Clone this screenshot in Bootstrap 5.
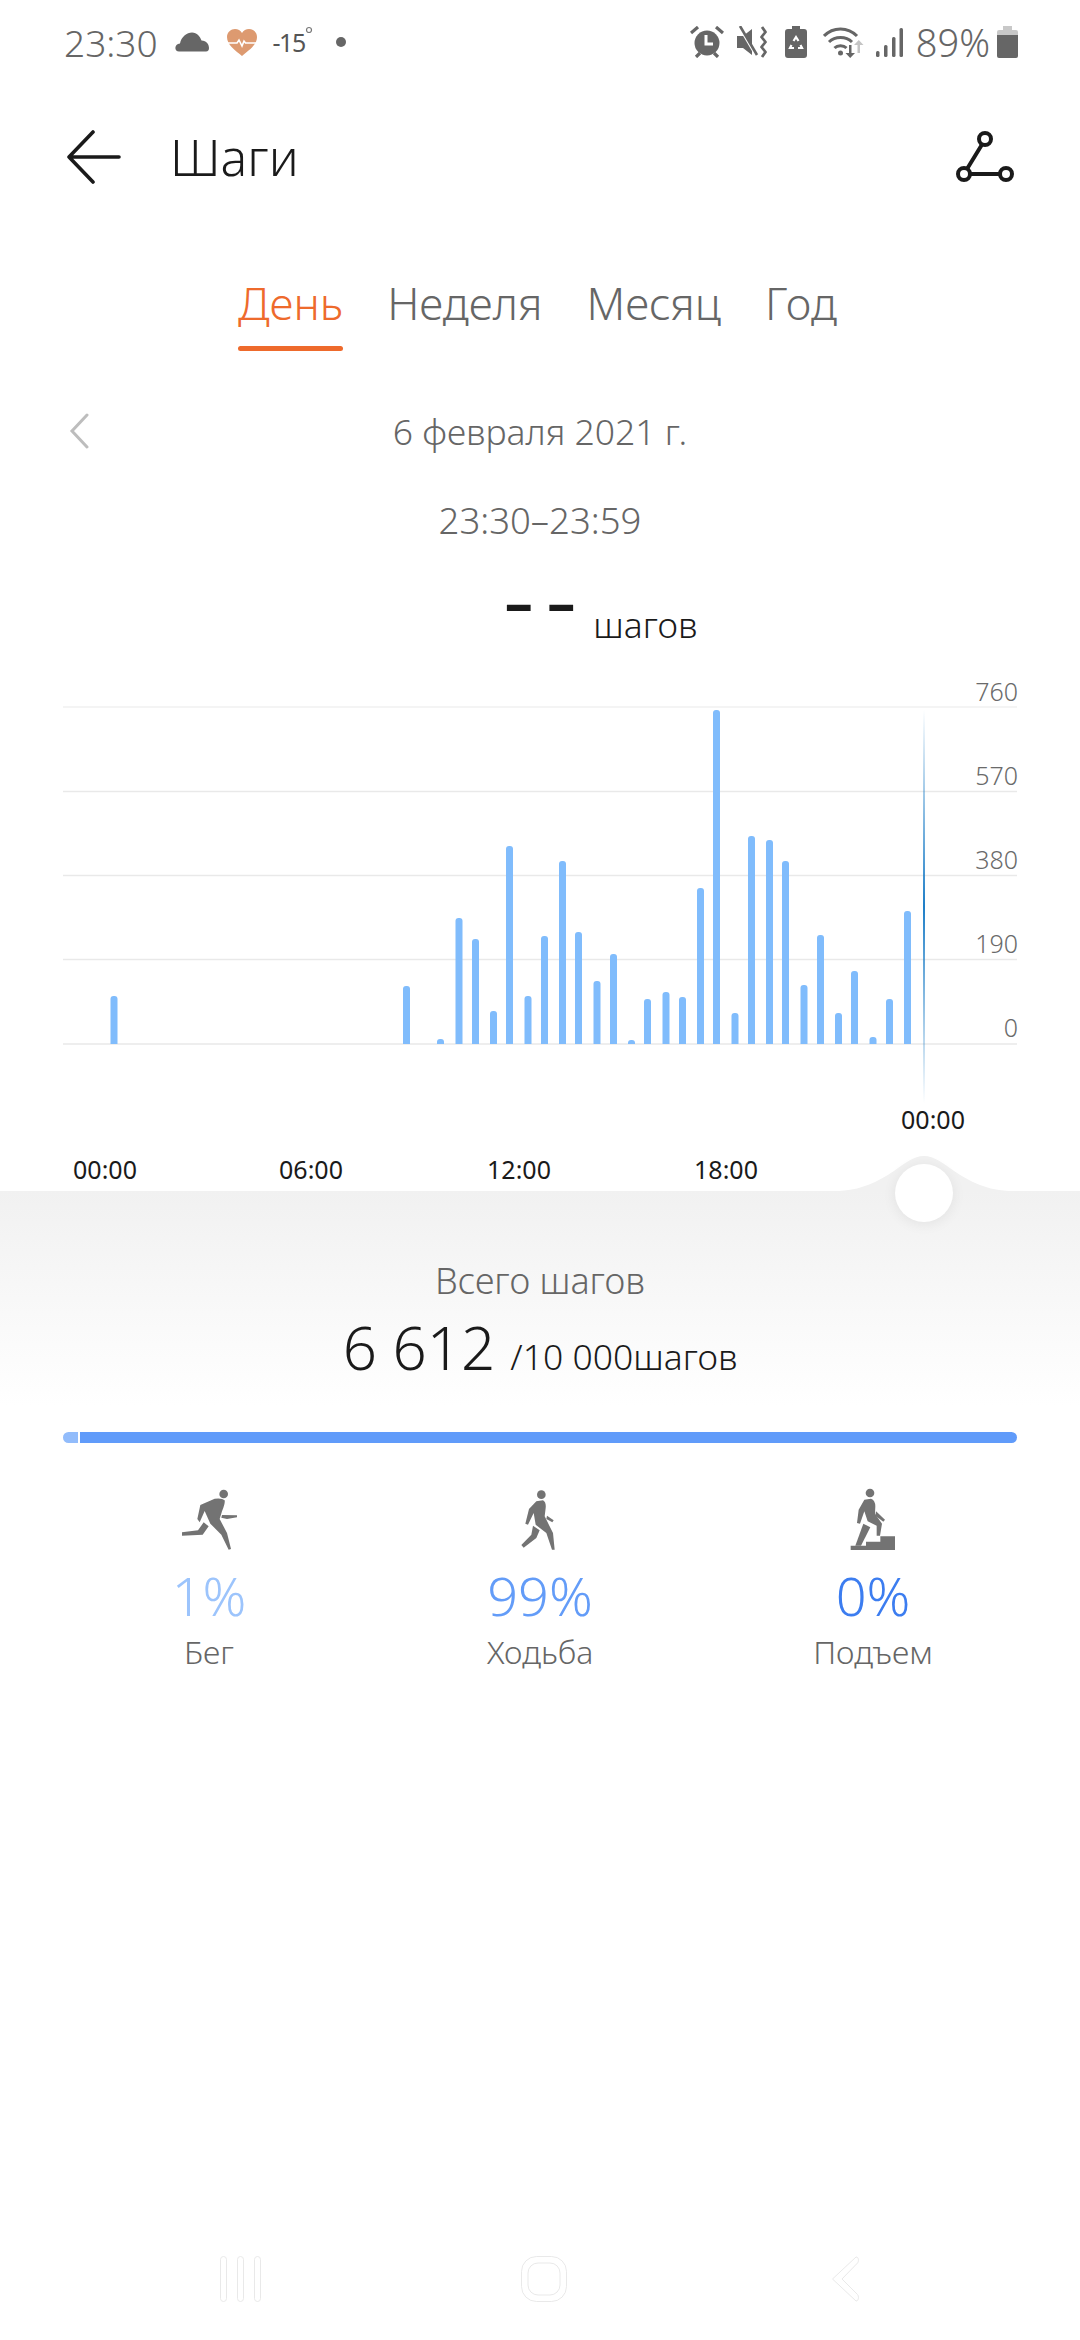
<!DOCTYPE html>
<html lang="ru">
<head>
<meta charset="utf-8">
<title>Шаги</title>
<link href="https://cdn.jsdelivr.net/npm/bootstrap@5.3.0/dist/css/bootstrap.min.css" rel="stylesheet">
<style>
html,body{width:1080px;height:2340px;overflow:hidden;background:#fff;}
body{font-family:"Noto Sans","Open Sans",sans-serif;font-weight:300;color:#666;}
.phone{width:1080px;height:2340px;}
.sbar{height:84px;padding:0 62px 0 64px;font-size:37px;color:#666;line-height:1;}
.sbar svg{display:block;flex:none;}
.temp{font-size:25px;letter-spacing:-1.500px;margin-left:16px;color:#555;font-weight:400;}
.cloudi{margin-left:17px;}
.hearti{margin-left:18px;}
.batt{font-size:38px;margin-left:13px;}
.hdr{height:146px;padding:0 66px 0 67px;}
.ttl{font-size:50px;color:#1a1a1a;margin:0 0 0 49px;font-weight:300;line-height:60px;}
.tabs{gap:44px;font-size:44.400px;line-height:60px;margin-top:43px;padding-right:5px;}
.tabi{display:flex;flex-direction:column;align-items:stretch;color:#666;}
.tabi::after{content:"";height:5px;margin-top:13px;border-radius:3px;background:transparent;}
.tabi.on{color:#ee6a2c;}
.tabi.on::after{background:#ee6a2c;}
.daterow{height:50px;margin-top:55px;padding:0 69px;font-size:35.500px;line-height:50px;}
.datetxt{flex:1;text-align:center;}
.spc{width:20px;}
.timer{height:50px;margin-top:39px;font-size:36.500px;line-height:50px;text-align:center;}
.stepr{height:125px;display:grid;grid-template-columns:1fr auto 1fr;}
.dash{font-size:56px;color:#1a1a1a;font-weight:700;line-height:70px;margin-top:21px;}
.unit{font-size:35.500px;color:#1a1a1a;line-height:46px;margin:56px 0 0 18px;}
.chartbox{height:521px;}
.chartbox svg{display:block;}
.panel{flex:1;background:linear-gradient(#f1f1f1 0,#fff 215px);padding-top:68px;}
.hump{position:absolute;left:829px;top:-36px;}
.thumb{position:absolute;left:895px;top:-27px;width:58px;height:58px;border-radius:50%;background:#fff;box-shadow:0 2px 14px rgba(0,0,0,.07);}
.cap{font-size:36px;line-height:44px;text-align:center;}
.totr{margin-top:8px;height:72px;color:#1a1a1a;font-size:35.500px;}
.big{font-size:60px;line-height:72px;margin-right:15px;}
.pbar{height:11px;margin:49px 63px 0;gap:2px;}
.seg1{width:15px;background:#92bcfb;border-radius:6px 0 0 6px;}
.seg2{flex:1;background:#609bfa;border-radius:0 6px 6px 0;}
.stats{display:grid;grid-template-columns:332px 330px 336px;margin:40px 0 0 43px;width:998px;text-align:center;}
.stats svg{display:block;margin:0 auto;}
.pct{font-size:54px;line-height:64px;margin-top:5px;}
.p1{color:#9cc4fc}.p2{color:#639cf8}.p3{color:#3c7df0}
.lbl{font-size:32px;line-height:44px;margin-top:3px;color:#666;}
.navb{padding:0 220px 38px;height:84px;}
.homei{margin-right:6px;}
</style>
</head>
<body>
<div class="phone d-flex flex-column">

  <div class="sbar d-flex align-items-center">
    <span>23:30</span>
    <svg class="cloudi" width="34" height="20" viewBox="0 0 34 20"><path fill="#666" d="M4 19.500C-1 19.500-1 12 5 11.500 6 5 12 .5 17 .5c5 0 8 4 9.500 8 5 0 7.500 4 7.500 7.500 0 2-1 3.500-3 3.500z"/></svg>
    <svg class="hearti" width="30" height="27" viewBox="0 0 30 27"><path fill="#dd9a70" d="M15 27C8 21 0 16 0 8 0 3 4 0 8 0c3 0 5.500 1.500 7 4 1.500-2.500 4-4 7-4 4 0 8 3 8 8 0 8-8 13-15 19z"/><path fill="none" stroke="#fff" stroke-width="1.600" d="M0 14h10l2-3 3 6 2-5 1.500 2H30"/></svg>
    <span class="temp">-15</span>
    <svg class="ms-0" width="10" height="26" viewBox="0 0 10 26" style="margin-top:-6px"><circle cx="4" cy="4" r="2.500" fill="none" stroke="#777" stroke-width="1.200"/></svg>
    <svg width="10" height="10" viewBox="0 0 10 10" style="margin-left:21px"><circle cx="5" cy="5" r="5" fill="#666"/></svg>

    <svg class="ms-auto" width="34" height="32" viewBox="0 0 34 32"><circle cx="17" cy="17" r="12.500" fill="#666"/><path fill="none" stroke="#fff" stroke-width="3" d="M16 9v9h7"/><path fill="none" stroke="#666" stroke-width="3.200" d="M1 7l7-6M33 7l-7-6M6 31l4-4M28 31l-4-4"/></svg>
    <svg style="margin-left:13px" width="30" height="32" viewBox="0 0 30 32"><path fill="#666" d="M0 10h6l9-7v26l-9-7H0z"/><path stroke="#fff" stroke-width="2" d="M2 1l17 29"/><path stroke="#666" stroke-width="2.600" d="M3 0l17 29"/><path fill="none" stroke="#666" stroke-width="2.800" stroke-linejoin="round" d="M25 1l3.500 5-4 5 4 5-4 5 4 5-3.500 5"/></svg>
    <svg style="margin-left:18px" width="22" height="32" viewBox="0 0 22 32"><path fill="#666" fill-rule="evenodd" d="M7 0h8v3h4a3 3 0 0 1 3 3v23a3 3 0 0 1-3 3H3a3 3 0 0 1-3-3V6a3 3 0 0 1 3-3h4z"/><path fill="none" stroke="#fff" stroke-width="2.200" d="M8.500 15l2.500-4 2.500 4M6.500 19l-1.500 3h4M15.500 19l1.500 3h-4"/></svg>
    <svg style="margin-left:16px" width="42" height="31" viewBox="0 0 42 31"><path fill="none" stroke="#666" stroke-width="3" d="M1 9c9-9.500 24-9.500 33 0M6 15c6-6 17-6 23 0M11.500 21c3-3 9-3 12 0"/><circle cx="17.500" cy="26" r="2.500" fill="#666"/><path fill="#666" d="M26 18h2.500v8H32l-4.800 5-4.700-5H26z"/><path fill="#c4c4c4" d="M37 27h-2.500v-8H31l4.800-5 4.700 5H37z" transform="translate(0 -1)"/></svg>
    <svg style="margin-left:11px" width="27" height="29" viewBox="0 0 27 29"><g fill="#666"><rect x="0" y="23" width="3.500" height="6" rx="1.500"/><rect x="8" y="17" width="3.500" height="12" rx="1.500"/><rect x="16" y="9" width="3.500" height="20" rx="1.500"/><rect x="23.500" y="0" width="3.500" height="29" rx="1.500"/></g></svg>
    <span class="batt">89%</span>
    <svg style="margin-left:7px" width="21" height="32" viewBox="0 0 21 32"><path fill="#c8c8c8" d="M6 0h9v4h4a2 2 0 0 1 2 2v3H0V6a2 2 0 0 1 2-2h4z"/><path fill="#666" d="M0 9h21v21a2 2 0 0 1-2 2H2a2 2 0 0 1-2-2z"/></svg>
  </div>

  <div class="hdr d-flex align-items-center">
    <svg width="54" height="54" viewBox="0 0 54 54"><path fill="none" stroke="#1a1a1a" stroke-width="3.600" stroke-linecap="round" stroke-linejoin="round" d="M26 2L2 27l24 25M2 27h50"/></svg>
    <h1 class="ttl">Шаги</h1>
    <svg class="ms-auto" width="58" height="52" viewBox="0 0 58 52"><g fill="none" stroke="#1a1a1a" stroke-width="4"><circle cx="29" cy="8" r="6"/><circle cx="8" cy="43" r="6"/><circle cx="50" cy="43" r="6"/><path d="M26 13.500L11 38M14 43h30"/></g></svg>
  </div>

  <div class="tabs d-flex justify-content-center">
    <div class="tabi on">День</div>
    <div class="tabi">Неделя</div>
    <div class="tabi">Месяц</div>
    <div class="tabi">Год</div>
  </div>

  <div class="daterow d-flex align-items-center">
    <svg width="20" height="36" viewBox="0 0 20 36"><path fill="none" stroke="#bdbdbd" stroke-width="3" stroke-linecap="round" d="M18 2L3 18l15 16"/></svg>
    <div class="datetxt">6 февраля 2021 г.</div>
    <div class="spc"></div>
  </div>

  <div class="timer">23:30–23:59</div>

  <div class="stepr">
    <span></span>
    <div class="dash">– –</div>
    <div class="unit">шагов</div>
  </div>

  <div class="chartbox">
    <svg width="1080" height="521" viewBox="0 670 1080 521" font-family="Noto Sans, Open Sans, sans-serif" font-size="25">
      <defs>
        <linearGradient id="cur" x1="0" y1="0" x2="0" y2="1"><stop offset="0" stop-color="#1f7fc8" stop-opacity="0"/><stop offset=".5" stop-color="#1f7fc8"/><stop offset="1" stop-color="#1f7fc8" stop-opacity="0"/></linearGradient>
        <clipPath id="base"><rect x="0" y="670" width="1080" height="374"/></clipPath>
      </defs>
      <g stroke="#e9e9e9" stroke-width="1.500">
        <path d="M63 707H1017" stroke-width="1"/><path d="M63 791.500H1017"/><path d="M63 875.500H1017"/><path d="M63 959.500H1017"/><path d="M63 1044H1017"/>
      </g>
      <g fill="#80bcfc" clip-path="url(#base)">
        <rect x="110.500" y="996" width="7" height="60" rx="3"/>
        <rect x="403" y="986" width="7" height="70" rx="3"/>
        <rect x="437" y="1039" width="7" height="20" rx="3"/>
        <rect x="455.500" y="918" width="7" height="140" rx="3"/>
        <rect x="472" y="939" width="7" height="120" rx="3"/>
        <rect x="490" y="1011" width="7" height="50" rx="3"/>
        <rect x="506" y="846" width="7" height="210" rx="3"/>
        <rect x="524.500" y="996" width="7" height="60" rx="3"/>
        <rect x="541" y="936" width="7" height="120" rx="3"/>
        <rect x="559" y="861" width="7" height="200" rx="3"/>
        <rect x="575" y="932" width="7" height="120" rx="3"/>
        <rect x="593.500" y="981" width="7" height="70" rx="3"/>
        <rect x="610" y="954" width="7" height="100" rx="3"/>
        <rect x="628" y="1040" width="7" height="20" rx="3"/>
        <rect x="644" y="999" width="7" height="60" rx="3"/>
        <rect x="662.500" y="992" width="7" height="60" rx="3"/>
        <rect x="679" y="997" width="7" height="60" rx="3"/>
        <rect x="697" y="888" width="7" height="170" rx="3"/>
        <rect x="713" y="710" width="7" height="340" rx="3"/>
        <rect x="731.500" y="1013" width="7" height="50" rx="3"/>
        <rect x="748" y="836" width="7" height="220" rx="3"/>
        <rect x="766" y="840" width="7" height="220" rx="3"/>
        <rect x="782" y="861" width="7" height="200" rx="3"/>
        <rect x="800.500" y="985" width="7" height="70" rx="3"/>
        <rect x="817" y="935" width="7" height="120" rx="3"/>
        <rect x="835" y="1013" width="7" height="50" rx="3"/>
        <rect x="851" y="971" width="7" height="90" rx="3"/>
        <rect x="869.500" y="1037" width="7" height="20" rx="3"/>
        <rect x="886" y="999" width="7" height="60" rx="3"/>
        <rect x="904" y="911" width="7" height="150" rx="3"/>
      </g>
      <rect x="923" y="710" width="2" height="393" fill="url(#cur)"/>
      <g fill="#6a6a6a" text-anchor="end" font-size="25">
        <text x="1018" y="701">760</text><text x="1018" y="785">570</text><text x="1018" y="869">380</text><text x="1018" y="953">190</text><text x="1018" y="1037">0</text>
      </g>
      <g fill="#1a1a1a" text-anchor="middle" font-weight="400">
        <text x="933" y="1129">00:00</text><text x="105" y="1179">00:00</text><text x="311" y="1179">06:00</text><text x="519" y="1179">12:00</text><text x="726" y="1179">18:00</text>
      </g>
    </svg>
  </div>

  <div class="panel position-relative">
    <svg class="hump" width="190" height="36" viewBox="0 0 190 36"><path fill="#f1f1f1" d="M0 36H6C32 36 50 26 65 16 76 8 85 1 95 1 105 1 114 8 125 16 140 26 158 36 184 36H190Z"/></svg>
    <div class="thumb"></div>
    <div class="cap">Всего шагов</div>
    <div class="totr d-flex justify-content-center align-items-baseline"><span class="big">6 612</span><span>/10 000шагов</span></div>
    <div class="pbar d-flex"><div class="seg1"></div><div class="seg2"></div></div>
    <div class="stats">
      <div>
        <svg width="75" height="75" viewBox="0 0 225 225"><g fill="#737373"><circle cx="155" cy="33" r="13"/><path d="M85 66L128 47Q150 44 158 52 160 60 150 85L143 108 165 150 177 198 170 200 148 155 115 122 105 100 98 84 83 118 76 108Z"/><path d="M150 96L195 97V103L165 108 148 104Z"/><path d="M30 148L78 142 95 118 110 130 92 155 30 158Z"/></g></svg>
        <div class="pct p1">1%</div><div class="lbl">Бег</div>
      </div>
      <div>
        <svg width="75" height="75" viewBox="0 0 225 225"><g fill="#737373"><circle cx="115" cy="35" r="13"/><path d="M100 55L120 52Q130 58 128 75L125 100 150 150 155 200 147 200 130 150 98 125 92 90 75 125 67 122 78 78Z"/><path d="M132 98L152 112 148 118 130 108Z"/><path d="M90 128L110 142 100 165 62 194 55 186 85 155Z"/></g></svg>
        <div class="pct p2">99%</div><div class="lbl">Ходьба</div>
      </div>
      <div>
        <svg width="75" height="75" viewBox="0 0 225 225"><g fill="#737373"><circle cx="102" cy="30" r="13"/><path d="M85 50L105 47Q118 52 118 70L117 92 138 122 132 158H122V128L95 115 85 85 72 122 63 120 68 80Z"/><path d="M120 85L147 110 142 116 118 98Z"/><path d="M82 122L103 133 75 188H58Z"/><path d="M44 188H90V176H133V160H177V201H44Z"/></g></svg>
        <div class="pct p3">0%</div><div class="lbl">Подъем</div>
      </div>
    </div>
  </div>

  <div class="navb d-flex justify-content-between">
    <svg width="42" height="46" viewBox="0 0 42 46"><g fill="none" stroke="#e9e9e9"><rect x=".5" y=".5" width="6" height="45" rx="3"/><rect x="17.500" y=".5" width="6" height="45" rx="3"/><rect x="34.500" y=".5" width="6" height="45" rx="3"/></g></svg>
    <svg class="homei" width="46" height="46" viewBox="0 0 46 46"><g fill="none" stroke="#e9e9e9"><rect x=".5" y=".5" width="45" height="45" rx="15"/><rect x="7" y="7" width="32" height="32" rx="10"/></g></svg>
    <svg width="28" height="46" viewBox="0 0 28 46"><path fill="none" stroke="#e9e9e9" d="M24 1L.5 23 24 45c3 0 3-5 1.500-6.500L10 23 25.500 7C27 5.500 27 1 24 1z"/></svg>
  </div>
</div>
</body>
</html>
